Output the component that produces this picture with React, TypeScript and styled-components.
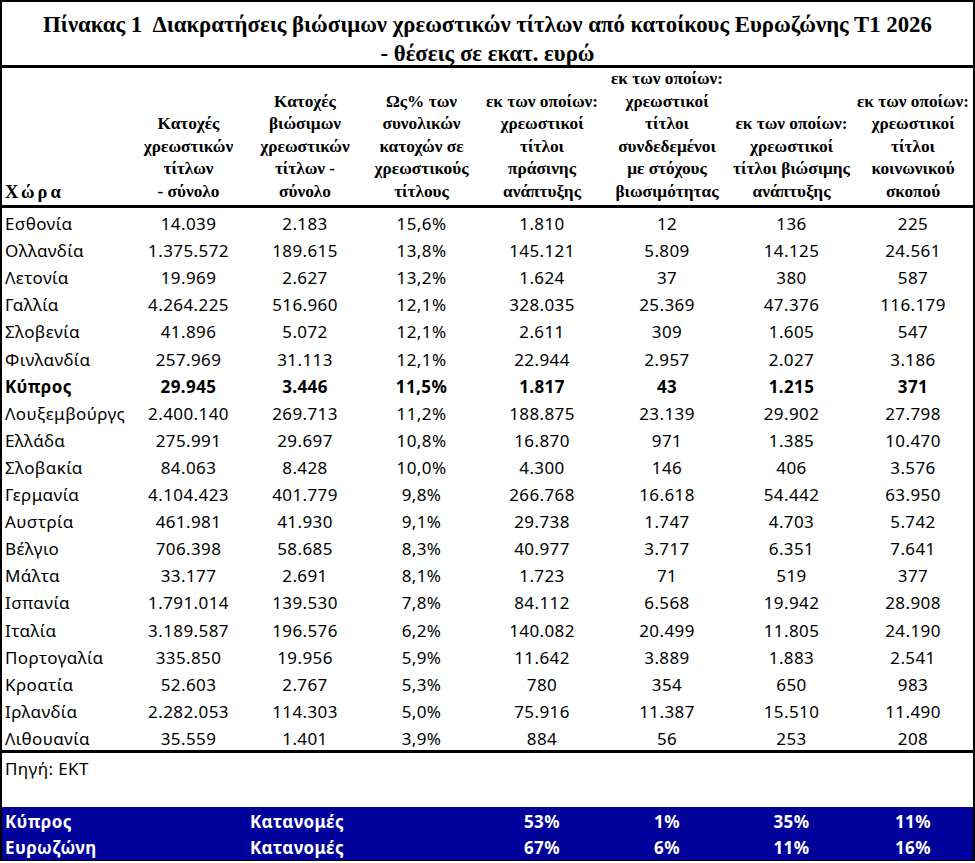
import styled, { createGlobalStyle } from 'styled-components';

const GlobalStyle = createGlobalStyle`
  html, body {
    margin: 0;
    padding: 0;
    background: #fff;
  }
`;

const COLS = '128px 117px 116px 117px 124px 126px 123px 120px';

const Sheet = styled.div`
  width: 975px;
  box-sizing: border-box;
  border-left: 2px solid #000;
  border-right: 2px solid #000;
  border-top: 2px solid #000;
  color: #000;
`;

const Title = styled.div`
  height: 66px;
  box-sizing: border-box;
  padding-top: 8px;
  border-bottom: 3px solid #000;
  font-family: 'Liberation Serif', 'Times New Roman', serif;
  font-weight: bold;
  font-size: 22.8px;
  line-height: 29px;
  text-align: center;
`;

const HeaderRow = styled.div`
  display: grid;
  grid-template-columns: ${COLS};
  height: 140px;
  box-sizing: border-box;
  border-bottom: 3px solid #000;
  font-family: 'Liberation Serif', 'Times New Roman', serif;
  font-weight: bold;
  font-size: 17.3px;
  line-height: 22.5px;
`;

const HeadCell = styled.div<{ $left?: boolean }>`
  display: flex;
  flex-direction: column;
  justify-content: flex-end;
  align-items: ${(p) => (p.$left ? 'flex-start' : 'center')};
  padding: 0 0 2px ${(p) => (p.$left ? '3px' : '0')};
  white-space: nowrap;
`;

const CountryHead = styled.span`
  font-size: 18.5px;
  letter-spacing: 3px;
`;

const Body = styled.div`
  border-bottom: 3px solid #000;
`;

const Row = styled.div<{ $bold?: boolean }>`
  display: grid;
  grid-template-columns: ${COLS};
  height: 27.1px;
  align-items: end;
  font-family: 'Noto Sans', 'Open Sans', sans-serif;
  font-size: 17px;
  letter-spacing: 0.4px;
  line-height: 22px;
  font-weight: ${(p) => (p.$bold ? 700 : 400)};
`;

const Cell = styled.div<{ $left?: boolean }>`
  text-align: ${(p) => (p.$left ? 'left' : 'center')};
  padding-left: ${(p) => (p.$left ? '3px' : '0')};
  white-space: nowrap;
`;

const Source = styled.div`
  height: 54px;
  padding: 5px 0 0 3px;
  box-sizing: border-box;
  font-family: 'Noto Sans', 'Open Sans', sans-serif;
  font-size: 17px;
  letter-spacing: 0.4px;
  line-height: 22px;
`;

const Band = styled.div`
  background: #00009a;
  color: #fff;
  border-bottom: 1px solid #000;
  padding-bottom: 1px;
`;

const BandRow = styled(Row)`
  height: 26px;
  font-weight: 700;
`;

const BandLabel = styled(Cell)`
  grid-column: span 3;
  display: grid;
  grid-template-columns: 245px 1fr;
  padding-left: 3px;
  text-align: left;
`;

const headers: string[][] = [
  ['Κατοχές', 'χρεωστικών', 'τίτλων', '- σύνολο'],
  ['Κατοχές', 'βιώσιμων', 'χρεωστικών', 'τίτλων -', 'σύνολο'],
  ['Ως% των', 'συνολικών', 'κατοχών σε', 'χρεωστικούς', 'τίτλους'],
  ['εκ των οποίων:', 'χρεωστικοί', 'τίτλοι', 'πράσινης', 'ανάπτυξης'],
  ['εκ των οποίων:', 'χρεωστικοί', 'τίτλοι', 'συνδεδεμένοι', 'με στόχους', 'βιωσιμότητας'],
  ['εκ των οποίων:', 'χρεωστικοί', 'τίτλοι βιώσιμης', 'ανάπτυξης'],
  ['εκ των οποίων:', 'χρεωστικοί', 'τίτλοι', 'κοινωνικού', 'σκοπού'],
];

const rows: string[][] = [
  ['Εσθονία', '14.039', '2.183', '15,6%', '1.810', '12', '136', '225'],
  ['Ολλανδία', '1.375.572', '189.615', '13,8%', '145.121', '5.809', '14.125', '24.561'],
  ['Λετονία', '19.969', '2.627', '13,2%', '1.624', '37', '380', '587'],
  ['Γαλλία', '4.264.225', '516.960', '12,1%', '328.035', '25.369', '47.376', '116.179'],
  ['Σλοβενία', '41.896', '5.072', '12,1%', '2.611', '309', '1.605', '547'],
  ['Φινλανδία', '257.969', '31.113', '12,1%', '22.944', '2.957', '2.027', '3.186'],
  ['Κύπρος', '29.945', '3.446', '11,5%', '1.817', '43', '1.215', '371'],
  ['Λουξεμβούργς', '2.400.140', '269.713', '11,2%', '188.875', '23.139', '29.902', '27.798'],
  ['Ελλάδα', '275.991', '29.697', '10,8%', '16.870', '971', '1.385', '10.470'],
  ['Σλοβακία', '84.063', '8.428', '10,0%', '4.300', '146', '406', '3.576'],
  ['Γερμανία', '4.104.423', '401.779', '9,8%', '266.768', '16.618', '54.442', '63.950'],
  ['Αυστρία', '461.981', '41.930', '9,1%', '29.738', '1.747', '4.703', '5.742'],
  ['Βέλγιο', '706.398', '58.685', '8,3%', '40.977', '3.717', '6.351', '7.641'],
  ['Μάλτα', '33.177', '2.691', '8,1%', '1.723', '71', '519', '377'],
  ['Ισπανία', '1.791.014', '139.530', '7,8%', '84.112', '6.568', '19.942', '28.908'],
  ['Ιταλία', '3.189.587', '196.576', '6,2%', '140.082', '20.499', '11.805', '24.190'],
  ['Πορτογαλία', '335.850', '19.956', '5,9%', '11.642', '3.889', '1.883', '2.541'],
  ['Κροατία', '52.603', '2.767', '5,3%', '780', '354', '650', '983'],
  ['Ιρλανδία', '2.282.053', '114.303', '5,0%', '75.916', '11.387', '15.510', '11.490'],
  ['Λιθουανία', '35.559', '1.401', '3,9%', '884', '56', '253', '208'],
];

const shares: [string, string[]][] = [
  ['Κύπρος', ['53%', '1%', '35%', '11%']],
  ['Ευρωζώνη', ['67%', '6%', '11%', '16%']],
];

export default function App() {
  return (
    <>
      <GlobalStyle />
      <Sheet>
        <Title>
          Πίνακας 1&nbsp; Διακρατήσεις βιώσιμων χρεωστικών τίτλων από κατοίκους Ευρωζώνης Τ1 2026
          <br />- θέσεις σε εκατ. ευρώ
        </Title>
        <HeaderRow>
          <HeadCell $left>
            <CountryHead>Χώρα</CountryHead>
          </HeadCell>
          {headers.map((lines, i) => (
            <HeadCell key={i}>
              {lines.map((l) => (
                <span key={l}>{l}</span>
              ))}
            </HeadCell>
          ))}
        </HeaderRow>
        <Body>
          {rows.map((r) => (
            <Row key={r[0]} $bold={r[0] === 'Κύπρος'}>
              {r.map((v, j) => (
                <Cell key={j} $left={j === 0}>
                  {v}
                </Cell>
              ))}
            </Row>
          ))}
        </Body>
        <Source>Πηγή: ΕΚΤ</Source>
        <Band>
          {shares.map(([name, vals]) => (
            <BandRow key={name}>
              <BandLabel>
                <span>{name}</span>
                <span>Κατανομές</span>
              </BandLabel>
              <Cell />
              {vals.map((v) => (
                <Cell key={v}>{v}</Cell>
              ))}
            </BandRow>
          ))}
        </Band>
      </Sheet>
    </>
  );
}
